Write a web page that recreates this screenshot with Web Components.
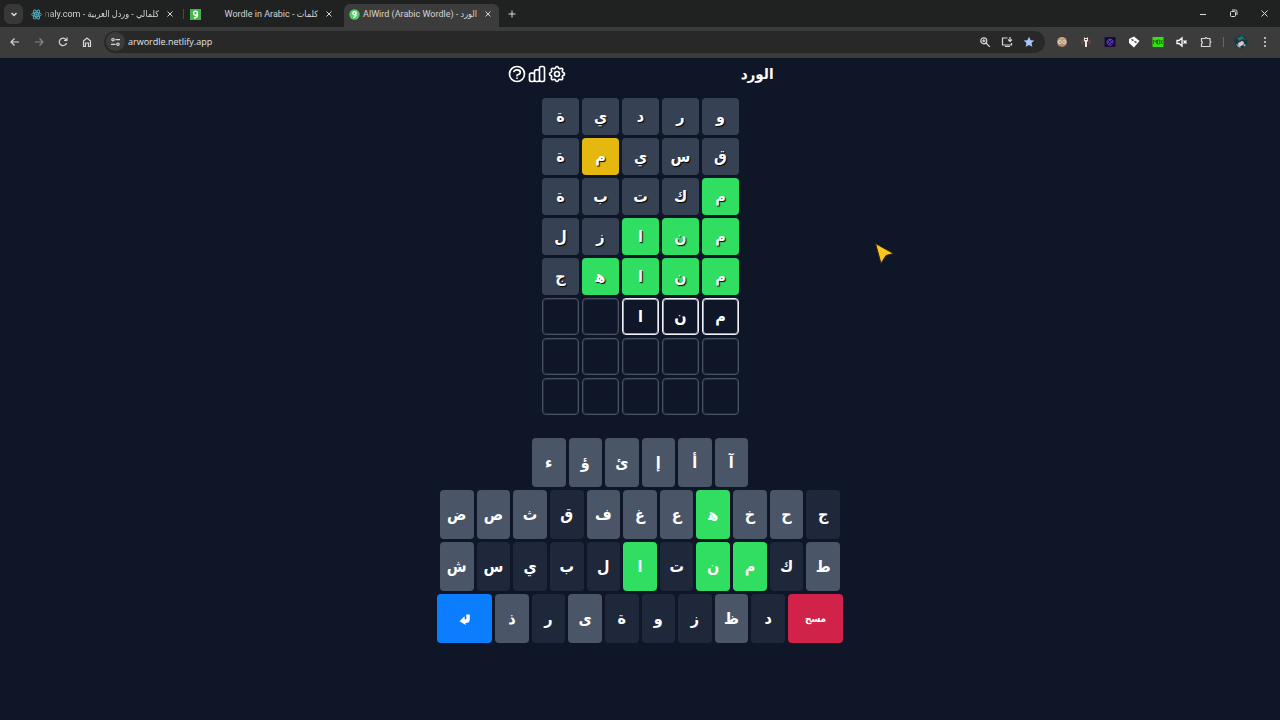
<!DOCTYPE html>
<html lang="ar">
<head>
<meta charset="utf-8">
<title>الورد - AlWird (Arabic Wordle)</title>
<style>
  html, body { height: 100%; }
  body {
    margin: 0;
    background: #0f1628;
    color: #fff;
    font-family: "Open Sans", "DejaVu Sans Condensed", "DejaVu Sans", sans-serif;
    overflow: hidden;
  }
</style>
</head>
<body>
<app-window></app-window>

<template id="app-window">
  <style>
    :host { display: flex; flex-direction: column; min-height: 100%; }
    nav { display: flex; align-items: center; height: 27px; background: #202121; }
    main { display: flex; flex-direction: column; align-items: center; }
    .strip { display: flex; gap: 4px; align-self: flex-end; margin-left: 3px; }
    .menu { width: 19px; height: 20px; margin-left: 4px; border-radius: 6px; background: #383838; }
    .plus { width: 20px; height: 20px; margin-left: 3px; }
    .controls { display: flex; margin-left: auto; }
    .controls button { width: 31px; height: 27px; }
    button { display: grid; place-items: center; padding: 0; border: 0; background: none; color: #ddd; }
    svg { fill: none; stroke: currentColor; stroke-width: 1; display: block; }
    .pointer { position: absolute; left: 873px; top: 241px; }
  </style>
  <nav aria-label="Tabs">
    <button class="menu" aria-label="Search tabs"><svg width="10" height="10"><path d="M2.500 4l2.500 2.500L7.500 4" stroke-width="1.500"/></svg></button>
    <div class="strip" role="tablist">
      <browser-tab label="كلمالي - وردل العربية - naly.com" faded divided>
        <svg slot="icon" width="11" height="11" viewBox="0 0 22 22"><g fill="none" stroke="#4cb8c8" stroke-width="1.800"><ellipse cx="11" cy="11" rx="10" ry="4"/><ellipse cx="11" cy="11" rx="10" ry="4" transform="rotate(60 11 11)"/><ellipse cx="11" cy="11" rx="10" ry="4" transform="rotate(120 11 11)"/><circle cx="11" cy="11" r="1.500" fill="#4cb8c8"/></g></svg>
      </browser-tab>
      <browser-tab label="كلمات - Wordle in Arabic">
        <svg slot="icon" width="11" height="11" viewBox="0 0 11 11"><path d="M0 0h11v11H0z" fill="#43b64a" stroke="none"/><path d="M7.500 4.200a2 2 0 1 0-1 1.700l1-2.500v3q-.6 2.600-3.700 2.600" fill="none" stroke="#fff" stroke-width="1.400"/></svg>
      </browser-tab>
      <browser-tab label="الورد - AlWird (Arabic Wordle)" active>
        <svg slot="icon" width="11" height="11" viewBox="0 0 11 11"><circle cx="5.500" cy="5.500" r="5.200" fill="#58c766" stroke="none"/><path d="M7 4.300a1.600 1.600 0 1 0-1 1.400l1-1.700v2.500Q6.600 8.500 4.200 8.400" fill="none" stroke="#fff" stroke-width="1.200"/></svg>
      </browser-tab>
    </div>
    <button class="plus" aria-label="New tab"><svg width="10" height="10"><path d="M5 1.500v7M1.500 5h7"/></svg></button>
    <div class="controls">
      <button aria-label="Minimize"><svg width="8" height="8"><path d="M1 4.500h6"/></svg></button>
      <button aria-label="Restore"><svg width="9" height="9"><rect x="1.500" y="2.500" width="5" height="5" rx="1"/><path d="M3 1h3.500q1.500 0 1.500 1.500V6"/></svg></button>
      <button aria-label="Close"><svg width="9" height="9"><path d="M1.500 1.500l6 6M7.500 1.500l-6 6"/></svg></button>
    </div>
  </nav>
  <browser-toolbar></browser-toolbar>
  <main>
    <game-header></game-header>
    <letter-board></letter-board>
    <letter-keyboard></letter-keyboard>
  </main>
  <svg class="pointer" width="24" height="26" viewBox="0 0 24 26" aria-hidden="true"><path d="M2.500 2.500L20.500 12.500L13 14.500L8 22.500Z" fill="#fbc51c" stroke="#2b2412" stroke-width="1"/></svg>
</template>

<template id="browser-tab">
  <style>
    :host { display: flex; align-items: center; box-sizing: border-box; width: 155px; height: 23px; padding: 0 5px 3px; border-radius: 6px 6px 0 0; position: relative; }
    :host([active]) { background: #3c3c3c; }
    :host([divided])::after { content: ""; position: absolute; right: -3px; top: 5px; width: 1px; height: 10px; background: #484848; }
    ::slotted(svg) { display: block; flex: none; }
    button { border: 0; background: none; padding: 0; color: #d5d5d5; font: inherit; }
    .title { flex: 1; min-width: 0; margin: 0 5px 0 0; direction: rtl; text-align: start; overflow: hidden; white-space: nowrap; font-family: Roboto, "DejaVu Sans Condensed", "DejaVu Sans", sans-serif; font-size: 9px; line-height: 16px; }
    :host([faded]) .title { -webkit-mask-image: linear-gradient(to right, transparent, #000 12px); mask-image: linear-gradient(to right, transparent, #000 12px); }
    .close { display: grid; place-items: center; width: 12px; height: 12px; }
  </style>
  <slot name="icon"></slot>
  <button class="title" role="tab"></button>
  <button class="close" aria-label="Close tab"><svg width="8" height="8" fill="none" stroke="currentColor"><path d="M1.500 1.500l5 5M6.500 1.500l-5 5"/></svg></button>
</template>

<template id="browser-toolbar">
  <style>
    :host { display: flex; align-items: center; height: 31px; box-sizing: border-box; padding: 0 3px 2px 3px; background: #3c3c3c; }
    button { display: grid; place-items: center; flex: none; width: 24px; height: 24px; padding: 0; border: 0; background: none; color: #d8d8d8; }
    svg { display: block; fill: none; stroke: currentColor; stroke-width: 1.2; }
    .dim { color: #888; }
    .address { display: flex; align-items: center; flex: 1; height: 22px; margin: 0 5px; padding: 0 5px 0 2px; border-radius: 11px; background: #282828; }
    .address button { width: 22px; }
    .address .site { width: 19px; height: 19px; border-radius: 10px; background: #3c3c3c; margin-right: 3px; }
    input { flex: 1; min-width: 0; border: 0; padding: 0; background: none; color: #e4e4e4; font: inherit; font-size: 9px; line-height: 16px; outline: 0; }
    .rule { width: 1px; height: 10px; margin: 0 5px; background: #666; }
  </style>
  <button aria-label="Back"><svg width="12" height="12"><path d="M10 6H2M5.500 2.500L2 6l3.500 3.500"/></svg></button>
  <button class="dim" aria-label="Forward"><svg width="12" height="12"><path d="M2 6h8M6.500 2.500L10 6 6.500 9.500"/></svg></button>
  <button aria-label="Reload"><svg width="12" height="12"><path d="M9.500 7A3.700 3.700 0 1 1 8.800 3.500L9.800 4.500M10 1.500v3H7"/></svg></button>
  <button aria-label="Home"><svg width="12" height="12"><path d="M2.500 5L6 2l3.500 3v5.500h-2V7h-3v3.500h-2z"/></svg></button>
  <div class="address">
    <button class="site" aria-label="Site information"><svg width="11" height="10"><circle cx="3" cy="2.700" r="1.200"/><path d="M5.500 2.700H10M1 7.300h4.500"/><circle cx="8" cy="7.300" r="1.200"/></svg></button>
    <input aria-label="Address" value="arwordle.netlify.app">
    <button aria-label="Zoom"><svg width="12" height="12"><circle cx="4.800" cy="4.800" r="3"/><path d="M7 7l3.800 3.800M3.300 4.800h3M4.800 3.300v3"/></svg></button>
    <button aria-label="Install"><svg width="13" height="12"><path d="M6.500 2H1.500v7h9V7M4 10.500h5M9 1v4M7 3.500l2 2 2-2"/></svg></button>
    <button aria-label="Bookmark"><svg width="12" height="12"><path d="M6 .8l1.600 3.400 3.700.4-2.800 2.500.8 3.700L6 8.900l-3.300 1.900.8-3.700L.7 4.600l3.700-.4z" fill="#a8c7fa" stroke="none"/></svg></button>
  </div>
  <button aria-label="Reader extension"><svg width="12" height="12"><g stroke="none"><circle cx="6" cy="6" r="5" fill="#b98b6b"/><path d="M1.500 3.500Q6-1 10.500 3.500z" fill="#cfa66f"/><circle cx="3.800" cy="6" r="2" fill="#ddd8cf"/><circle cx="8.200" cy="6" r="2" fill="#ddd8cf"/><circle cx="4" cy="6" r=".8" fill="#567"/><circle cx="8" cy="6" r=".8" fill="#567"/></g></svg></button>
  <button aria-label="Character extension"><svg width="12" height="12"><g stroke="none"><path d="M1.500 4l2-1v6l-2-1zM8.500 3l2 1v4l-2 1z" fill="#783f38"/><path d="M4 1l1 1h2l1-1v4L7 6v5H5V6L4 5z" fill="#ede9e3"/><path d="M5 3h2v1H5z" fill="#333"/></g></svg></button>
  <button aria-label="Spiral extension"><svg width="12" height="12"><path d="M0.500 1h11v10H.500z" fill="#170c35" stroke="none"/><path d="M8.500 8A3 3 0 1 1 9 5.500C9 8 7 7 7.300 5A1.500 1.500 0 1 0 7 7" stroke="#7442e4" stroke-width="1"/></svg></button>
  <button aria-label="Dice extension"><svg width="12" height="12"><g stroke="none"><path d="M6 .5L11.500 5 6 11.500 1 7 1 3z" fill="#fff"/><path d="M4 3l2 1-1 1-2-1zM7 5l2 1-1 1-2-1z" fill="#333"/></g></svg></button>
  <button aria-label="Video extension"><svg width="12" height="12"><path d="M.5 1h11v10H.5z" fill="#36e20d" stroke="none"/><path d="M1.500 8V4l2 2 1-2v4M5.500 4h2v4h-2zM8.500 4l2 4M10.500 4l-2 4" stroke="#165c0b" stroke-width=".8"/></svg></button>
  <button aria-label="Mute extension"><svg width="12" height="12"><path d="M1 4.500h2L6 2v8L3 7.500H1zM7.500 4.500l3 3M10.500 4.500l-3 3" stroke="#fff" stroke-width="1.300"/></svg></button>
  <button aria-label="Extensions"><svg width="12" height="12"><path d="M1.500 2.500H5Q6 .5 7 2.500h3V5q2 1 0 2v3.500H1.500V7.700q2-1.200 0-2.400z"/></svg></button>
  <span class="rule"></span>
  <button aria-label="Profile"><svg width="14" height="14"><g stroke="none"><circle cx="7" cy="7" r="6.500" fill="#183840"/><path d="M3 3l5-2 4 4-3-1-4 2z" fill="#28706f"/><path d="M4 8l4-2 2 1-1 3-4 2z" fill="#d9c8cc"/><path d="M2 9l3 1 2 3-3-1zM9 8l3 2-2 2z" fill="#98a9ba"/></g></svg></button>
  <button aria-label="Menu"><svg width="4" height="12"><g fill="#ddd" stroke="none"><circle cx="2" cy="2" r="1"/><circle cx="2" cy="6" r="1"/><circle cx="2" cy="10" r="1"/></g></svg></button>
</template>

<template id="game-header">
  <style>
    :host { display: flex; direction: rtl; align-items: center; justify-content: space-between; width: 100%; max-width: 267px; height: 32px; }
    h1 { margin: 0; font: bold 15px/24px "DejaVu Sans Condensed", "DejaVu Sans", sans-serif; }
    div { display: flex; direction: ltr; }
    button { width: 20px; height: 20px; padding: 0; border: 0; background: none; color: #fff; }
    svg { display: block; fill: none; stroke: currentColor; stroke-width: 2; stroke-linecap: round; stroke-linejoin: round; }
  </style>
  <h1>الورد</h1>
  <div>
    <button aria-label="مساعدة"><svg width="20" height="20" viewBox="0 0 24 24"><path d="M8.228 9c.549-1.165 2.030-2 3.772-2 2.210 0 4 1.343 4 3 0 1.400-1.278 2.575-3.006 2.907-.542.104-.994.540-.994 1.093m0 3h.010M21 12a9 9 0 11-18 0 9 9 0 0118 0z"/></svg></button>
    <button aria-label="إحصائيات"><svg width="20" height="20" viewBox="0 0 24 24"><path d="M9 19v-6a2 2 0 00-2-2H5a2 2 0 00-2 2v6a2 2 0 002 2h2a2 2 0 002-2zm0 0V9a2 2 0 012-2h2a2 2 0 012 2v10m-6 0a2 2 0 002 2h2a2 2 0 002-2m0 0V5a2 2 0 012-2h2a2 2 0 012 2v14a2 2 0 01-2 2h-2a2 2 0 01-2-2z"/></svg></button>
    <button aria-label="إعدادات"><svg width="20" height="20" viewBox="0 0 24 24"><path d="M10.325 4.317c.426-1.756 2.924-1.756 3.350 0a1.724 1.724 0 002.573 1.066c1.543-.940 3.310.826 2.370 2.370a1.724 1.724 0 001.065 2.572c1.756.426 1.756 2.924 0 3.350a1.724 1.724 0 00-1.066 2.573c.940 1.543-.826 3.310-2.370 2.370a1.724 1.724 0 00-2.572 1.065c-.426 1.756-2.924 1.756-3.350 0a1.724 1.724 0 00-2.573-1.066c-1.543.940-3.310-.826-2.370-2.370a1.724 1.724 0 00-1.065-2.572c-1.756-.426-1.756-2.924 0-3.350a1.724 1.724 0 001.066-2.573c-.940-1.543.826-3.310 2.370-2.370.996.608 2.296.070 2.572-1.065z"/><path d="M15 12a3 3 0 11-6 0 3 3 0 016 0z"/></svg></button>
  </div>
</template>

<template id="letter-tile">
  <style>
    :host { display: grid; place-items: center; box-sizing: border-box; height: 37px; border: 1px solid #475163; border-radius: 4px; box-shadow: inset 0 0 0 1px #222b3c; font: bold 16px/20px "DejaVu Sans Condensed", "DejaVu Sans", sans-serif; }
    :host([state="typed"]) { border-color: #f4f4ff; box-shadow: inset 0 0 0 1px #9ea0b0; }
    :host([state="absent"]) { background: #364153; border: 0; box-shadow: none; text-shadow: 1px 1px 1px #000; }
    :host([state="present"]) { background: #e5b80f; border: 0; box-shadow: none; text-shadow: 1px 1px 1px #000; }
    :host([state="correct"]) { background: #30df61; border: 0; box-shadow: none; text-shadow: 1px 1px 1px #000; }
  </style>
  <slot></slot>
</template>

<template id="letter-board">
  <style>
    :host { display: grid; direction: rtl; grid-template-columns: repeat(5, 37px); gap: 3px; padding: 8px 0 23px 1px; }
  </style>
</template>

<template id="letter-key">
  <style>
    :host { display: block; flex: 1; min-width: 0; }
    :host([wide]) { flex: 0 0 55px; }
    button { display: grid; place-items: center; width: 100%; height: 49px; padding: 0; border: 0; border-radius: 4px; background: #4a5567; color: #fff; font: bold 16px/20px "DejaVu Sans Condensed", "DejaVu Sans", sans-serif; }
    :host([state="absent"]) button { background: #1f283a; }
    :host([state="correct"]) button { background: #30df61; }
    :host([state="enter"]) button { background: #0b7eff; }
    :host([state="delete"]) button { background: #d12349; font-size: 10px; }
  </style>
  <button><slot></slot></button>
</template>

<template id="letter-keyboard">
  <style>
    :host { display: flex; flex-direction: column; gap: 3px; direction: rtl; width: 100%; max-width: 406px; }
    .row { display: flex; gap: 3px; padding: 0 3px; }
    .row.short { padding: 0 95px; }
    .row.full { padding: 0; }
  </style>
</template>

<script>
  class TemplateElement extends HTMLElement {
    constructor() {
      super();
      this.attachShadow({ mode: "open" })
        .append(document.getElementById(this.localName).content.cloneNode(true));
    }
  }

  class BrowserTab extends TemplateElement {
    connectedCallback() {
      const title = this.shadowRoot.querySelector(".title");
      title.textContent = this.getAttribute("label");
      title.setAttribute("aria-selected", this.hasAttribute("active"));
    }
  }

  // The joiner keeps a lone heh in its open, initial form.
  const shape = (letter) => letter === "ه" ? "ه\u200d" : letter;

  class LetterBoard extends TemplateElement {
    connectedCallback() {
      const states = { a: "absent", p: "present", c: "correct", t: "typed", "-": "empty" };
      const guesses = [
        ["وردية", "aaaaa"], ["قسيمة", "aaapa"], ["مكتبة", "caaaa"], ["منازل", "cccaa"],
        ["مناهج", "cccca"], ["منا", "ttt--"], ["", "-----"], ["", "-----"]
      ];
      for (const [word, marks] of guesses) {
        [...marks].forEach((mark, i) => {
          const tile = document.createElement("letter-tile");
          tile.setAttribute("state", states[mark]);
          tile.textContent = shape(word[i] || "");
          this.shadowRoot.append(tile);
        });
      }
    }
  }

  class LetterKeyboard extends TemplateElement {
    connectedCallback() {
      const absent = "جكتلبيسدزوةرق", correct = "هنما";
      const makeRow = (letters, kind) => {
        const row = document.createElement("div");
        row.className = "row " + kind;
        for (const letter of letters) {
          const key = document.createElement("letter-key");
          if (absent.includes(letter)) key.setAttribute("state", "absent");
          if (correct.includes(letter)) key.setAttribute("state", "correct");
          key.textContent = shape(letter);
          row.append(key);
        }
        this.shadowRoot.append(row);
        return row;
      };
      makeRow("آأإئؤء", "short");
      makeRow("جحخهعغفقثصض", "");
      makeRow("طكمنتالبيسش", "");
      const last = makeRow("دظزوةىرذ", "full");
      last.insertAdjacentHTML("afterbegin", `<letter-key wide state="delete">مسح</letter-key>`);
      last.insertAdjacentHTML("beforeend", `<letter-key wide state="enter"><svg width="12" height="14" viewBox="0 0 12 14" role="img" aria-label="إدخال"><path d="M7.200 2.500H10.800V7.500Q10.800 11 6.500 11L6.800 13L.5 9.300L5.500 4.300L5.800 7.600Q7.600 7.600 7.600 6Q7.600 5 7.200 4.500Z" fill="#fff"/></svg></letter-key>`);
    }
  }

  customElements.define("letter-tile", class extends TemplateElement {});
  customElements.define("letter-key", class extends TemplateElement {});
  customElements.define("browser-tab", BrowserTab);
  customElements.define("browser-toolbar", class extends TemplateElement {});
  customElements.define("game-header", class extends TemplateElement {});
  customElements.define("letter-board", LetterBoard);
  customElements.define("letter-keyboard", LetterKeyboard);
  customElements.define("app-window", class extends TemplateElement {});
</script>
</body>
</html>
